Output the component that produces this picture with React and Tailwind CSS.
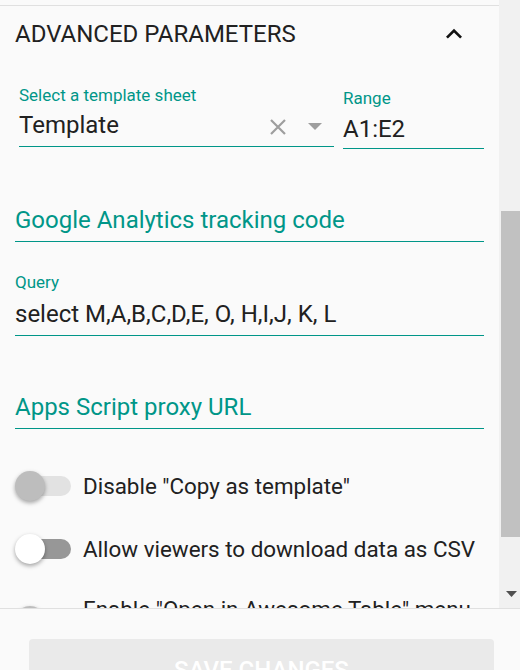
// App.jsx
//
// Advanced parameters panel: template sheet/range inputs, tracking code,
// query, proxy URL and a few switches, with a sticky save footer.

const TEAL = 'border-[#009688]'

function ChevronUp() {
  return (
    <svg width="32" height="32" viewBox="0 0 24 24" className="shrink-0">
      <path d="M12 8l-6 6 1.41 1.41L12 10.83l4.59 4.58L18 14z" fill="#111" />
    </svg>
  )
}

function ClearIcon() {
  return (
    <svg width="18" height="18" viewBox="0 0 18 18" className="shrink-0 mt-[4px]">
      <path d="M2 2L16 16M16 2L2 16" stroke="#9e9e9e" strokeWidth="2.2" />
    </svg>
  )
}

function DropArrow() {
  return (
    <svg width="14" height="7" viewBox="0 0 14 7" className="shrink-0 mt-[2px]">
      <path d="M0 0H14L7 7z" fill="#9e9e9e" />
    </svg>
  )
}

function Toggle({ on, className = '' }) {
  return (
    <div className={'relative w-[56px] h-[30px] shrink-0 ' + className}>
      <div
        className={
          'absolute left-[4px] right-0 top-[5px] h-[20px] rounded-full ' +
          (on ? 'bg-[#979797]' : 'bg-[#e2e2e2]')
        }
      />
      <div
        className={
          'absolute left-0 top-0 size-[30px] rounded-full shadow-[0_2px_4px_rgba(0,0,0,0.35)] ' +
          (on ? 'bg-white' : 'bg-[#bdbdbd]')
        }
      />
    </div>
  )
}

function SwitchRow({ label, on, className = '', toggleClass = '' }) {
  return (
    <div className={'flex gap-[12px] ' + className}>
      <Toggle on={on} className={toggleClass} />
      <span className="text-[22.4px] leading-[28px] text-[#212121] whitespace-nowrap">{label}</span>
    </div>
  )
}

export default function App() {
  return (
    <div className="w-[520px] h-[670px] flex flex-col bg-[#fafafa] overflow-hidden font-['Roboto',sans-serif]">
      {/* Scroll area */}
      <div className="h-[609px] flex border-b border-[#e0e0e0] shrink-0">
        <div className="flex-1 overflow-hidden">
          <div className="mt-[5px] border-t border-[#e0e0e0] pl-[15px] pr-[15px]">
            {/* Section header */}
            <div className="mt-[12px] flex items-center justify-between">
              <span className="text-[24px] leading-[28px] text-[#212121]">ADVANCED PARAMETERS</span>
              <div className="mr-[14px]">
                <ChevronUp />
              </div>
            </div>

            {/* Template sheet + range */}
            <div className="mt-[35px] flex items-start">
              <div className="ml-[4px] w-[315px]">
                <div className="text-[17px] leading-[20px] text-[#009688]">Select a template sheet</div>
                <div className={'mt-[6px] pb-[7px] flex items-center border-b ' + TEAL}>
                  <span className="flex-1 text-[24px] leading-[28px] text-[#212121]">Template</span>
                  <ClearIcon />
                  <div className="w-[21px]" />
                  <DropArrow />
                  <div className="w-[12px]" />
                </div>
              </div>
              <div className="ml-[9px] flex-1 pt-[3px]">
                <div className="text-[17px] leading-[20px] text-[#009688]">Range</div>
                <div className={'mt-[7px] pb-[4px] border-b ' + TEAL}>
                  <span className="text-[24px] leading-[28px] text-[#212121]">A1:E2</span>
                </div>
              </div>
            </div>

            {/* Tracking code */}
            <div className={'mt-[57px] pb-[6px] border-b ' + TEAL}>
              <span className="text-[24px] leading-[28px] text-[#009688]">Google Analytics tracking code</span>
            </div>

            {/* Query */}
            <div className="mt-[30px]">
              <div className="text-[17px] leading-[20px] text-[#009688]">Query</div>
              <div className={'mt-[8px] pb-[6px] border-b ' + TEAL}>
                <span className="text-[24px] leading-[28px] text-[#212121]">select M,A,B,C,D,E, O, H,I,J, K, L</span>
              </div>
            </div>

            {/* Proxy URL */}
            <div className={'mt-[57px] pb-[6px] border-b ' + TEAL}>
              <span className="text-[24px] leading-[28px] text-[#009688]">Apps Script proxy URL</span>
            </div>

            {/* Switches */}
            <SwitchRow className="mt-[42px] items-center" label={'Disable "Copy as template"'} on={false} />
            <SwitchRow className="mt-[33px] items-center" label="Allow viewers to download data as CSV" on />
            <SwitchRow
              className="mt-[31px] items-start"
              toggleClass="mt-[11px]"
              label={'Enable "Open in Awesome Table" menu'}
              on={false}
            />
          </div>
        </div>

        {/* Scrollbar */}
        <div className="w-[21px] bg-[#f1f1f1] flex flex-col shrink-0">
          <div className="mt-[211px] ml-[2px] h-[326px] bg-[#c1c1c1]" />
          <div className="flex-1" />
          <div className="mb-[11px] ml-[7px]">
            <svg width="11" height="6" viewBox="0 0 11 6">
              <path d="M0 0H11L5.5 6z" fill="#505050" />
            </svg>
          </div>
        </div>
      </div>

      {/* Footer */}
      <div className="flex-1 px-[29px] pt-[30px] pr-[26px]">
        <div className="h-[50px] rounded-[4px] bg-[#eaeaea] pt-[17px] text-center">
          <span className="text-[24px] leading-[28px] font-medium text-white">SAVE CHANGES</span>
        </div>
      </div>
    </div>
  )
}
